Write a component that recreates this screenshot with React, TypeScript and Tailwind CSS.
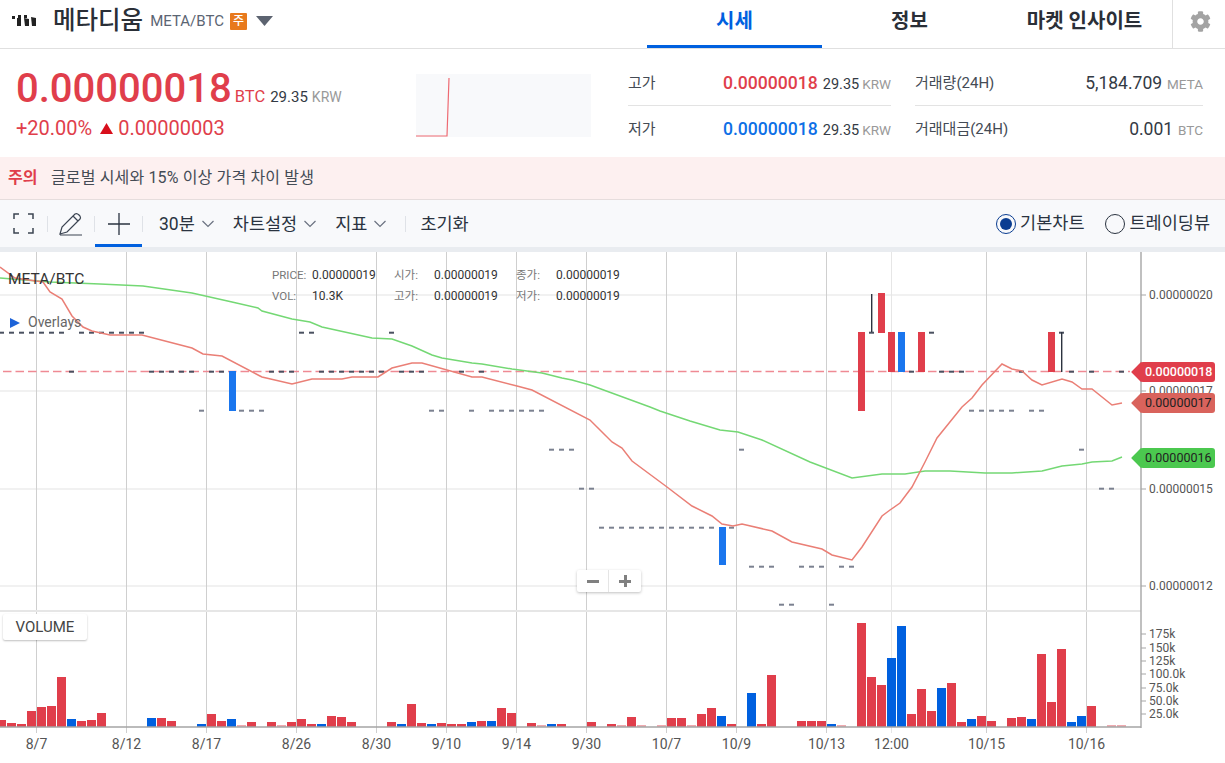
import { FaCog } from "react-icons/fa";

const FONT = "font-['Roboto','Noto_Sans_CJK_KR',sans-serif]";

const RED = "#e03e4b";
const PINK = "#eeaab0";
const BLUE = "#0060df";

// [left x, height, colour key]
const VOLUMES: [number, number, string][] = [
  [-3, 7, "r"], [7, 4, "r"], [17, 3, "r"], [27, 16, "r"], [37, 20, "r"], [47, 21, "r"], [57, 50, "r"], [67, 8, "b"], [77, 6, "r"], [87, 7, "r"], [97, 14, "r"],
  [147, 9, "b"], [157, 9, "r"], [167, 6, "r"],
  [197, 3, "b"], [207, 13, "r"], [217, 6, "r"], [227, 8, "b"], [237, 2, "p"], [247, 5, "r"], [267, 5, "r"], [277, 2, "p"], [287, 5, "r"], [297, 8, "r"], [307, 3, "r"], [317, 3, "b"], [327, 11, "r"], [337, 10, "r"], [347, 5, "r"],
  [387, 5, "r"], [397, 3, "b"], [407, 23, "r"], [417, 4, "r"], [427, 3, "b"], [437, 4, "r"], [447, 3, "r"], [457, 3, "r"], [467, 5, "b"], [477, 6, "r"], [487, 6, "b"], [497, 19, "r"], [507, 14, "r"],
  [527, 4, "r"], [537, 2, "p"], [547, 3, "b"], [557, 3, "r"], [587, 5, "r"], [607, 3, "r"], [617, 2, "p"], [627, 10, "r"], [637, 2, "p"], [657, 2, "p"], [667, 9, "r"], [677, 9, "r"], [687, 2, "p"], [697, 13, "r"], [707, 19, "r"], [717, 11, "b"], [727, 3, "r"],
  [747, 34, "b"], [757, 3, "r"], [767, 52, "r"], [797, 6, "r"], [807, 6, "r"], [817, 6, "r"], [827, 3, "b"], [837, 2, "p"],
  [857, 104, "r"], [867, 50, "r"], [877, 42, "r"], [887, 69, "b"], [897, 101, "b"], [907, 13, "r"], [917, 38, "r"], [927, 16, "r"], [937, 39, "b"], [947, 44, "r"], [957, 5, "r"], [967, 8, "b"], [977, 11, "r"], [987, 6, "r"],
  [1007, 9, "r"], [1017, 10, "r"], [1027, 8, "b"], [1037, 73, "r"], [1047, 25, "r"], [1057, 78, "r"], [1067, 5, "b"], [1077, 11, "b"], [1087, 21, "r"], [1107, 2, "p"], [1117, 2, "p"],
];

const VOL_COLOR: Record<string, string> = { r: RED, b: BLUE, p: PINK };

const range = (a: number, b: number) => Array.from({ length: b - a + 1 }, (_, i) => a + i);

// flat candles: y -> column indexes
const DASHES: [number, number[], string][] = [
  [332, [...range(0, 6), ...range(8, 14), 30, 31, 39, 87, 93, 106], "#4a5160"],
  [371, [7, ...range(15, 19), 21, 22, 27, 28, 29, ...range(32, 38), 40, 41, 42, 46, 48, 91, 94, 95, 96, 102, 107, 109, 112], "#4a5160"],
  [410, [20, 24, 25, 26, 43, 44, 47, ...range(49, 54), ...range(97, 101), 103, 104], "#7b8190"],
  [449, [55, 56, 57, 74, 108], "#7b8190"],
  [488, [58, 59, 110, 111], "#7b8190"],
  [527, [...range(60, 71), 73], "#7b8190"],
  [566, [75, 76, 77, 80, 81, 82, 84, 85], "#7b8190"],
  [604, [78, 79, 83], "#7b8190"],
];

// x, top, bottom, colour
const CANDLES: [number, number, number, string][] = [
  [229, 371, 411, "#1a76ee"],
  [719, 527, 565, "#1a76ee"],
  [858, 332, 411, RED],
  [878, 293, 333, RED],
  [888, 332, 372, RED],
  [898, 332, 372, "#1a76ee"],
  [918, 332, 372, RED],
  [1048, 332, 372, RED],
];

const RED_LINE =
  "0,267 15,278 43,282 50,292 62,299 72,316 83,327 92,331 110,335 142,335 192,348 203,354 222,356 260,376 262,377 292,384 312,379 342,379 352,377 378,377 392,368 412,363 422,363 472,377 482,377 517,386 532,390 590,420 600,430 612,442 622,448 632,461 667,487 692,506 712,516 722,524 733,526 742,524 772,531 792,542 822,549 832,555 852,560 862,547 882,516 890,510 900,503 912,487 925,462 937,438 962,407 972,398 982,385 1002,364 1012,369 1022,371 1032,380 1042,385 1062,379 1072,382 1082,389 1092,389 1112,405 1122,403";

const GREEN_LINE =
  "0,278 50,282 100,284 143,286 192,293 232,302 258,308 262,311 292,319 310,322 322,327 372,338 392,339 412,346 432,355 442,358 472,363 482,364 512,369 542,373 562,378 572,380 590,385 650,407 660,411 690,421 720,430 738,432 762,440 810,462 852,478 882,474 905,474 925,471 950,471 985,473 1012,473 1042,471 1062,466 1082,464 1092,462 1112,461 1122,457";

const X_LABELS: [number, string][] = [
  [36.5, "8/7"], [126.5, "8/12"], [206.5, "8/17"], [296.5, "8/26"], [376.5, "8/30"], [446.5, "9/10"], [516.5, "9/14"], [586.5, "9/30"], [666.5, "10/7"], [736.5, "10/9"], [826.5, "10/13"], [891.5, "12:00"], [986.5, "10/15"], [1086.5, "10/16"],
];

const PRICE_TICKS: [number, string][] = [[295, "0.00000020"], [391, "0.00000017"], [489, "0.00000015"], [586, "0.00000012"]];

const VOL_TICKS: [number, string][] = [[634, "175k"], [648, "150k"], [661, "125k"], [674, "100.0k"], [688, "75.0k"], [701, "50.0k"], [714, "25.0k"]];

const Chevron = () => (
  <svg width="14" height="8" viewBox="0 0 14 8" fill="none" stroke="#6b7280" strokeWidth="1.2">
    <path d="M1.5 1 L7 6.5 L12.5 1" />
  </svg>
);

const Divider = () => <div className="h-[16px] w-px bg-[#dfe2e7]" />;

const StatRow = ({ label, children, border }: { label: string; children: React.ReactNode; border?: boolean }) => (
  <div className={`flex h-[46px] items-center justify-between ${border ? "border-b border-[#e3e3e3] pt-[2px]" : ""}`}>
    <span className="text-[15px] text-[#444b55]">{label}</span>
    <span className="flex items-baseline">{children}</span>
  </div>
);

const KrwValue = ({ value, color }: { value: string; color: string }) => (
  <>
    <span className={`text-[17.6px] font-medium ${color}`}>{value}</span>
    <span className="ml-[5px] text-[14.5px] text-[#333a44]">29.35</span>
    <span className="ml-[3px] text-[13.5px] text-[#999]">KRW</span>
  </>
);

const PriceTag = ({ top, value, bg, text }: { top: string; value: string; bg: string; text: string }) => (
  <div className={`absolute left-[1130px] flex h-[20px] w-[85px] items-center ${top}`}>
    <div className={`absolute left-[4px] h-[14px] w-[14px] rotate-45 ${bg}`} />
    <div className={`absolute left-[10px] h-[20px] w-[75px] rounded-[3px] ${bg}`} />
    <span className={`relative ml-[15px] text-[12.5px] ${text}`}>{value}</span>
  </div>
);

const InfoCell = ({ label, value, labelW }: { label: string; value: string; labelW: string }) => (
  <div className="flex items-center">
    <span className={`text-[11.5px] text-[#777] ${labelW}`}>{label}</span>
    <span className="text-[12px] text-[#333]">{value}</span>
  </div>
);

const Chart = () => (
  <svg width="1225" height="511" viewBox="0 252 1225 511" className="block">
    {/* grid */}
    {PRICE_TICKS.map(([y]) => (
      <line key={y} x1="0" x2="1141" y1={y} y2={y} stroke="#f1f1f1" strokeWidth="2" />
    ))}
    {X_LABELS.map(([x, label]) => (
      <line key={label} x1={x} x2={x} y1="252" y2="733" stroke={label === "12:00" ? "#e6e6e6" : "#cfcfcf"} strokeWidth="1" />
    ))}
    <line x1="0" x2="1141" y1="611" y2="611" stroke="#e6e6e6" strokeWidth="2" />

    {/* volume */}
    {VOLUMES.map(([x, h, c]) => (
      <rect key={x} x={x} y={727 - h} width="9" height={h} fill={VOL_COLOR[c]} />
    ))}

    {/* last price line */}
    <line x1="3" x2="1130" y1="371.5" y2="371.5" stroke="#ef8a94" strokeWidth="1.6" strokeDasharray="8.5 4" />

    {/* candles */}
    {DASHES.map(([y, cols, color]) =>
      cols.map((k) => <rect key={`${y}-${k}`} x={10 * k - 1} y={y - 0.3} width="5" height="2" fill={color} />),
    )}
    {CANDLES.map(([x, top, bottom, color]) => (
      <rect key={x} x={x} y={top} width="7" height={bottom - top} fill={color} />
    ))}
    <rect x="871" y="294" width="1.4" height="38" fill="#2c3340" />
    <rect x="1061" y="332" width="1.4" height="40" fill="#2c3340" />

    {/* moving averages */}
    <polyline points={GREEN_LINE} fill="none" stroke="#74d874" strokeWidth="1.5" />
    <polyline points={RED_LINE} fill="none" stroke="#ea7f76" strokeWidth="1.5" />

    {/* axes */}
    <line x1="0" x2="1141" y1="727" y2="727" stroke="#a5a5a5" strokeWidth="1.6" />
    <line x1="1141" x2="1141" y1="252" y2="728" stroke="#a5a5a5" strokeWidth="1.4" />
    {X_LABELS.map(([x, label]) => (
      <text key={label} x={x} y="749" textAnchor="middle" fontSize="14" fill="#555" fontFamily="Roboto, sans-serif">
        {label}
      </text>
    ))}
    {PRICE_TICKS.map(([y, label]) => (
      <g key={label}>
        <line x1="1141" x2="1146" y1={y} y2={y} stroke="#a5a5a5" />
        <text x="1149" y={y + 4} fontSize="12" fill="#555" fontFamily="Roboto, sans-serif">
          {label}
        </text>
      </g>
    ))}
    {VOL_TICKS.map(([y, label]) => (
      <g key={label}>
        <line x1="1141" x2="1146" y1={y} y2={y} stroke="#a5a5a5" />
        <text x="1149" y={y + 4} fontSize="12" fill="#555" fontFamily="Roboto, sans-serif">
          {label}
        </text>
      </g>
    ))}
  </svg>
);

export default function App() {
  return (
    <div className={`h-[763px] w-[1225px] overflow-hidden bg-white ${FONT}`}>
      {/* top bar */}
      <header className="flex h-[49px] items-stretch border-b border-[#e0e0e0]">
        <div className="flex flex-1 items-center pb-[6px] pl-[12px]">
          <svg width="24" height="12" viewBox="0 0 24 12" fill="#222">
            <rect x="0" y="1" width="3" height="3" />
            <rect x="6" y="0" width="3" height="3" />
            <path d="M5 3 L9 3 L9 11 L5 11 Z" />
            <rect x="12" y="0" width="3" height="3" />
            <path d="M12 3 L17 4 L17 11 L13 11 Z" />
            <path d="M19 2 L24 3 L24 11 L20 11 Z" />
          </svg>
          <span className="ml-[17px] text-[24.5px] font-medium leading-none text-[#2a2f37]">메타디움</span>
          <span className="ml-[7px] text-[15px] text-[#5b6573]">META/BTC</span>
          <span className="ml-[6px] flex h-[17px] w-[17px] items-center justify-center rounded-[1px] bg-[#e87a1d] text-[12px] font-medium text-white">
            주
          </span>
          <svg width="17" height="10" viewBox="0 0 17 10" className="ml-[9px]" fill="#5c6370">
            <path d="M0 0 H17 L8.5 10 Z" />
          </svg>
        </div>
        <div className="flex w-[175px] items-center justify-center border-b-[3px] border-[#0060df] pb-[4px] text-[20px] font-bold text-[#0060df]">시세</div>
        <div className="flex w-[175px] items-center justify-center pb-[6px] text-[20px] font-bold text-[#2a2f37]">정보</div>
        <div className="flex w-[175px] items-center justify-center pb-[6px] text-[20px] font-bold text-[#2a2f37]">마켓 인사이트</div>
        <div className="flex w-[53px] items-center justify-center border-l border-[#e0e0e0] pb-[6px] pl-[2px]">
          <FaCog className="h-[21px] w-[21px] text-[#a3a3a3]" />
        </div>
      </header>

      {/* price summary */}
      <section className="flex h-[108px]">
        <div className="w-[416px] pl-[16px] pt-[17px]">
          <div className="flex items-baseline">
            <span className="text-[40px] font-medium leading-[46px] text-[#e03e4b]">0.00000018</span>
            <span className="ml-[3px] text-[16.5px] text-[#e03e4b]">BTC</span>
            <span className="ml-[5px] text-[15px] text-[#333a44]">29.35</span>
            <span className="ml-[4px] text-[14px] text-[#999]">KRW</span>
          </div>
          <div className="mt-[4px] flex items-center text-[20px] font-normal leading-[24px] text-[#e03e4b]">
            <span>+20.00%</span>
            <svg width="13" height="11" viewBox="0 0 13 11" className="ml-[8px] mr-[5px]" fill="#d80f1c">
              <path d="M6.5 0 L13 11 H0 Z" />
            </svg>
            <span>0.00000003</span>
          </div>
        </div>
        <div className="mt-[25px] h-[63px] w-[175px] bg-[#f8f9fb]">
          <svg width="175" height="63" viewBox="0 0 175 63" fill="none">
            <path d="M0 62 H31 L33 4" stroke="#ee6a72" strokeWidth="1.2" />
          </svg>
        </div>
        <div className="ml-[37px] mt-[11px] w-[263px]">
          <StatRow label="고가" border>
            <KrwValue value="0.00000018" color="text-[#e03e4b]" />
          </StatRow>
          <StatRow label="저가">
            <KrwValue value="0.00000018" color="text-[#0e6fe6]" />
          </StatRow>
        </div>
        <div className="ml-[24px] mt-[11px] w-[288px]">
          <StatRow label="거래량(24H)" border>
            <span className="text-[17.5px] text-[#333a44]">5,184.709</span>
            <span className="ml-[5px] text-[13.5px] text-[#999]">META</span>
          </StatRow>
          <StatRow label="거래대금(24H)">
            <span className="text-[17.5px] text-[#333a44]">0.001</span>
            <span className="ml-[5px] text-[13.5px] text-[#999]">BTC</span>
          </StatRow>
        </div>
      </section>

      {/* warning */}
      <div className="flex h-[43px] items-center border-b border-[#e6dddd] bg-[#fdf0f0] pl-[8px]">
        <span className="w-[43px] text-[16px] font-bold text-[#e03e4b]">주의</span>
        <span className="text-[16px] tracking-[0.15px] text-[#444b55]">글로벌 시세와 15% 이상 가격 차이 발생</span>
      </div>

      {/* chart toolbar */}
      <div className="flex h-[47px] items-center bg-[#f8f9fb] text-[17.5px] text-[#2a3340]">
        <div className="flex w-[47px] justify-center">
          <svg width="21" height="21" viewBox="0 0 21 21" fill="none" stroke="#3b4452" strokeWidth="1.5">
            <path d="M1 6 V1 H6 M15 1 H20 V6 M20 15 V20 H15 M6 20 H1 V15" />
          </svg>
        </div>
        <Divider />
        <div className="flex w-[46px] justify-center">
          <svg width="24" height="24" viewBox="0 0 24 24" fill="none" stroke="#3b4452" strokeWidth="1.2">
            <path d="M1 22 L3 15 L16 2 Q18 1 20 3 L21 4 Q22 6 21 7 L8 20 Z M14 4 L19 9 M1 23 H23" />
          </svg>
        </div>
        <Divider />
        <div className="relative flex h-full w-[47px] items-center justify-center">
          <svg width="22" height="22" viewBox="0 0 22 22" stroke="#2a3340" strokeWidth="1.3">
            <path d="M0 11 H22 M11 0 V22" />
          </svg>
          <div className="absolute bottom-0 left-0 h-[3px] w-full bg-[#0060df]" />
        </div>
        <Divider />
        <span className="ml-[16px] pt-[1px]">30분</span>
        <span className="ml-[6px]"><Chevron /></span>
        <span className="ml-[18px] pt-[1px]">차트설정</span>
        <span className="ml-[6px]"><Chevron /></span>
        <span className="ml-[18px] pt-[1px]">지표</span>
        <span className="ml-[6px]"><Chevron /></span>
        <div className="ml-[18px]"><Divider /></div>
        <span className="ml-[14px] pt-[1px]">초기화</span>
        <div className="ml-auto flex items-center pr-[15px]">
          <span className="flex h-[20px] w-[20px] items-center justify-center rounded-full border-[1.5px] border-[#0a3d91]">
            <span className="h-[12px] w-[12px] rounded-full bg-[#0a3d91]" />
          </span>
          <span className="ml-[4px]">기본차트</span>
          <span className="ml-[20px] h-[20px] w-[20px] rounded-full border-[1.5px] border-[#2a3340]" />
          <span className="ml-[5px]">트레이딩뷰</span>
        </div>
      </div>
      <div className="h-[5px] bg-[#e9ecf0]" />

      {/* chart */}
      <div className="relative h-[511px]">
        <Chart />

        <div className="absolute left-[8px] top-[16px] text-[15.5px] text-[#333]">META/BTC</div>
        <div className="absolute left-[10px] top-[60px] flex items-center">
          <svg width="10" height="10" viewBox="0 0 10 10" fill="#1d63d8">
            <path d="M0 0 L10 5 L0 10 Z" />
          </svg>
          <span className="ml-[8px] text-[14px] text-[#666]">Overlays</span>
        </div>

        <div className="absolute left-[272px] top-[16px] grid grid-cols-[122px_122px_auto] gap-y-[6px] leading-[15px]">
          <InfoCell label="PRICE:" value="0.00000019" labelW="w-[40px]" />
          <InfoCell label="시가:" value="0.00000019" labelW="w-[40px]" />
          <InfoCell label="종가:" value="0.00000019" labelW="w-[40px]" />
          <InfoCell label="VOL:" value="10.3K" labelW="w-[40px]" />
          <InfoCell label="고가:" value="0.00000019" labelW="w-[40px]" />
          <InfoCell label="저가:" value="0.00000019" labelW="w-[40px]" />
        </div>

        <PriceTag top="top-[110px]" value="0.00000018" bg="bg-[#e03e4b]" text="font-medium text-white" />
        <PriceTag top="top-[141px]" value="0.00000017" bg="bg-[#d9635c]" text="text-[#222]" />
        <PriceTag top="top-[196px]" value="0.00000016" bg="bg-[#4bc84f]" text="text-[#222]" />

        <div className="absolute left-[577px] top-[318px] flex h-[22px] w-[64px] items-center rounded-[2px] bg-white shadow-[0_1px_3px_rgba(0,0,0,0.25)]">
          <span className="flex h-full w-[32px] items-center justify-center border-r border-[#e5e5e5]">
            <span className="h-[3px] w-[12px] bg-[#808080]" />
          </span>
          <span className="relative flex h-full w-[32px] items-center justify-center">
            <span className="h-[3px] w-[12px] bg-[#808080]" />
            <span className="absolute h-[12px] w-[3px] bg-[#808080]" />
          </span>
        </div>

        <div className="absolute left-[3px] top-[362px] flex h-[26px] w-[84px] items-center justify-center rounded-[2px] bg-white text-[15px] text-[#444] shadow-[0_1px_2px_rgba(0,0,0,0.25)]">
          VOLUME
        </div>
      </div>
    </div>
  );
}
